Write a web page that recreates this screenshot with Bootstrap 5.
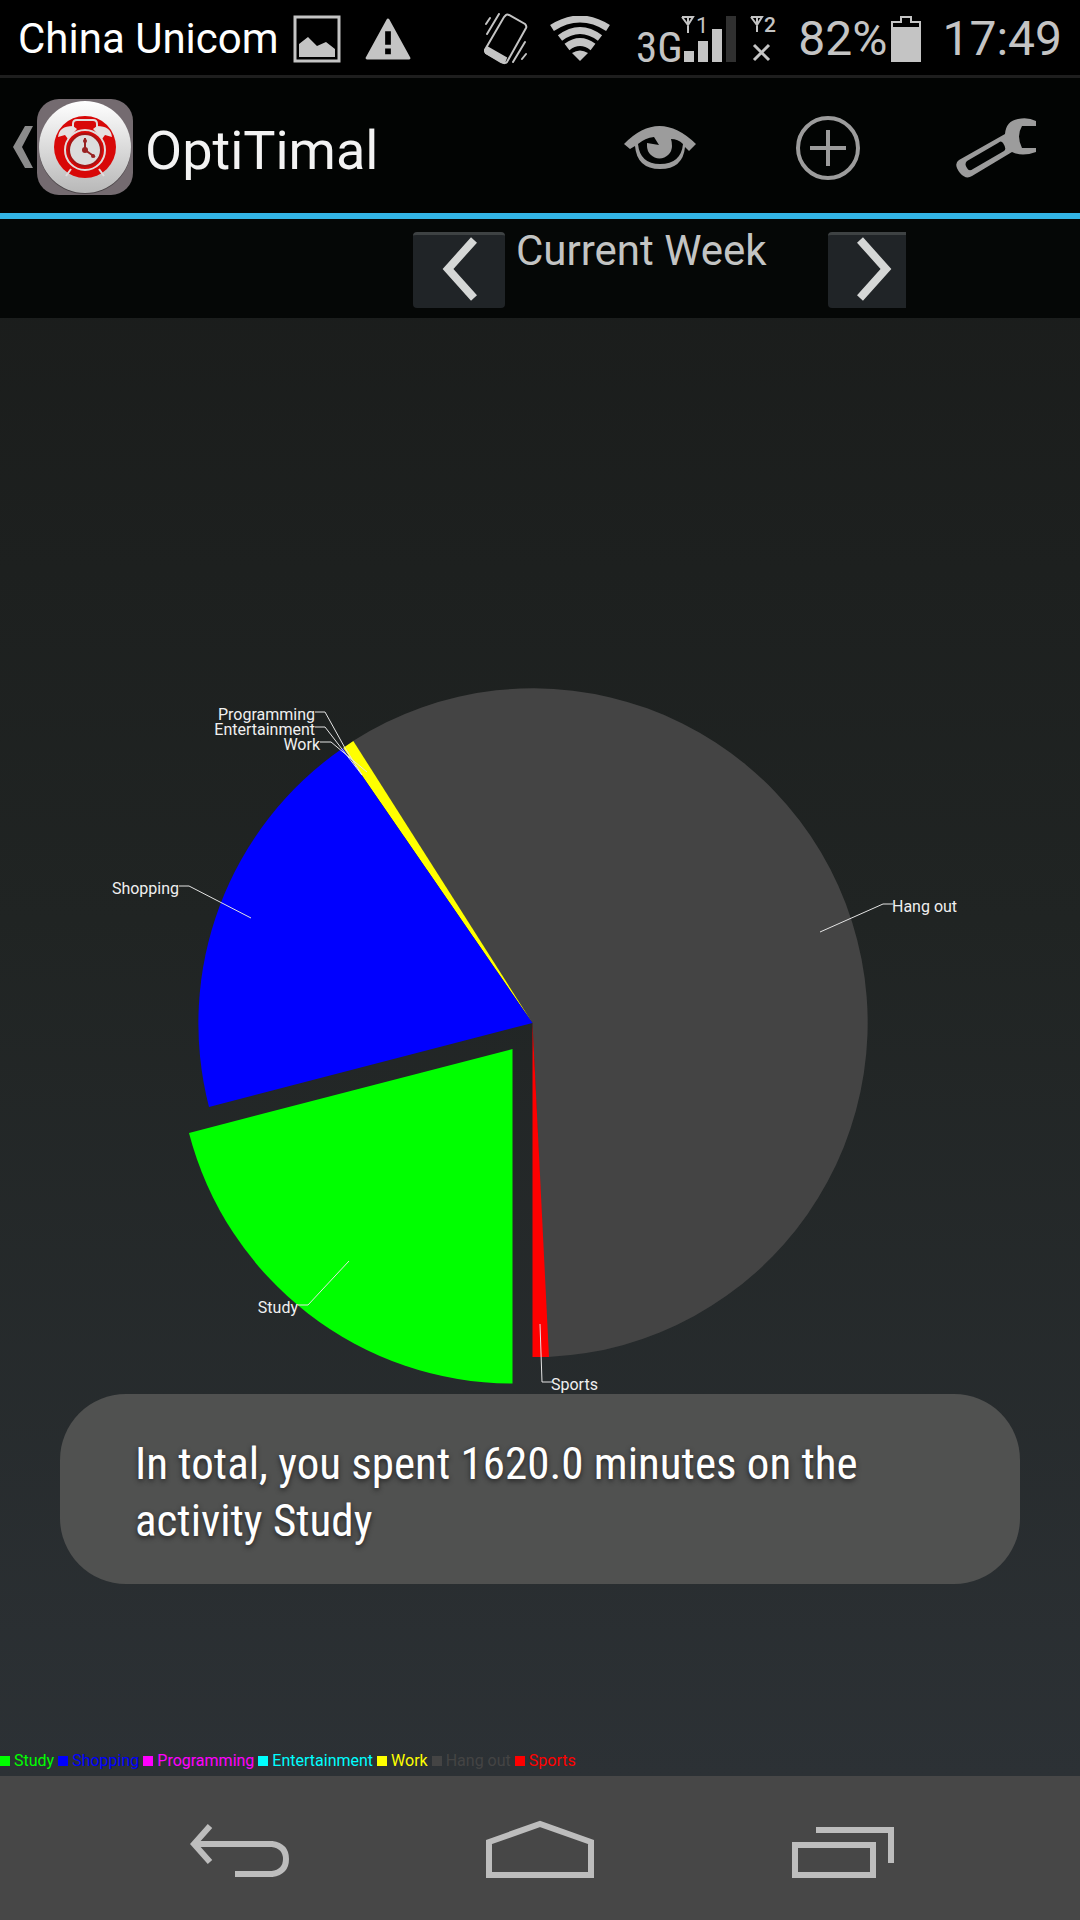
<!DOCTYPE html>
<html lang="en">
<head>
<meta charset="utf-8">
<meta name="viewport" content="width=device-width, initial-scale=1">
<title>OptiTimal</title>
<link href="https://cdn.jsdelivr.net/npm/bootstrap@5.3.0/dist/css/bootstrap.min.css" rel="stylesheet">
<style>
  body { font-family: Roboto, "Noto Sans", sans-serif; background: #000; color: #fff; }
  svg { display: block; flex: none; }
  .statusbar { height: 78px; border-bottom: 3px solid #1e1e1e; padding: 3px 18px 0; color: #c4c4c4; line-height: 56px; white-space: nowrap; }
  .carrier { font-size: 42px; color: #fff; padding-right: 14px; }
  .reading { font-size: 48px; }
  .battery { margin: 0 21px 0 4px; }
  .narrow { font-family: "Roboto Condensed", "Liberation Sans Narrow", Roboto, sans-serif; }
  .actionbar { height: 141px; border-bottom: 6px solid #33b5e5; background: #020403; }
  .brand { padding: 2px 0 0 13px; gap: 4px; color: #f3f3f3; }
  .brand h1 { font-size: 54px; font-weight: 400; line-height: 64px; padding: 8px 0 0 8px; }
  .plain { background: none; border: 0; padding: 0; }
  .action { width: 168px; height: 135px; }
  .weekbar { height: 99px; padding: 13px 0 0 413px; background: #050706; }
  .step { width: 92px; height: 76px; background: #202427; border: 0; border-top: 3px solid #3e4243; border-radius: 4px; padding: 0; }
  .step.clipped { width: 78px; border-radius: 4px 0 0 4px; }
  .week { width: 323px; padding-left: 11px; font-size: 42px; line-height: 38px; color: #c3c4c3; }
  .chart { background: linear-gradient(#1a1c1b, #202423 45%, #2c3135); }
  .chart text { font-size: 16px; fill: #f0f0f0; }
  .legend { height: 26px; gap: 4px; font-size: 16px; line-height: 22px; list-style: none; padding: 0; margin: 0; white-space: nowrap; }
  .legend li { display: flex; align-items: center; gap: 4px; }
  .legend li::before { content: ""; width: 10px; height: 10px; background: currentColor; }
  .study { color: #0f0; } .shopping { color: #00f; } .programming { color: #f0f; }
  .entertainment { color: #0ff; } .work { color: #ff0; } .hangout { color: #444; } .sports { color: #f00; }
  .notice { position: absolute; left: 60px; right: 60px; bottom: 192px; padding: 41px 72px 35px 75px; border-radius: 66px; background: #505150; font-size: 45px; line-height: 57px; text-shadow: 0 2px 5px #222; }
  .softkeys { height: 144px; background: #474747; padding-top: 2px; }
  .softkeys button { width: 300px; }
</style>
</head>
<body class="d-flex flex-column min-vh-100">
<header>
  <div class="statusbar d-flex align-items-center justify-content-between">
    <div class="d-flex align-items-center">
      <span class="carrier">China Unicom</span>
      <svg width="48" height="48" viewBox="0 0 48 48"><path d="M2 2H46V46H2Z" fill="none" stroke="#c4c4c4" stroke-width="3"/><path d="M6 42V29L15 22L24 31L33 27L42 34V42Z" fill="#c4c4c4"/></svg>
      <svg class="ms-4" width="46" height="42" viewBox="0 0 48 44"><path d="M24 2L46 42H2Z" fill="#c4c4c4" stroke="#c4c4c4" stroke-width="3" stroke-linejoin="round"/><path d="M21 14h6v14h-6zM21 32h6v6h-6z" fill="#000"/></svg>
    </div>
    <div class="d-flex align-items-center">
      <svg width="44" height="52" viewBox="0 0 44 52" fill="none" stroke="#c4c4c4" stroke-width="2" stroke-linecap="round"><path d="M22 2Q23 1 25 2L41 11Q43 13 42 15L23 49Q21 51 18 49L2 40Q0 38 2 35L20 4Z"/><path d="M3 34L22 45L20 50L17 49L2 40L1 37Z" fill="#c4c4c4"/><path d="M15 1L3 21M6 5L2 11M41 29L29 49M42 41L38 46"/></svg>
      <svg class="me-4" width="82" height="46" viewBox="-22 0 82 46" fill="none" stroke="#c4c4c4"><path d="M30 45L22 37Q30 32 38 37Z" fill="#c4c4c4" stroke="none"/><path d="M17 31Q30 21 43 31" stroke-width="8"/><path d="M10 22Q30 7 50 22" stroke-width="7"/><path d="M2 12Q30 -6 58 12" stroke-width="7"/></svg>
      <svg class="narrow" width="148" height="60" viewBox="-2 1 148 60" fill="#c4c4c4"><text x="0" y="54" font-size="43">3G</text><path d="M48 43h10v11H48zM62 33h10v21H62zM76 21h10v33H76z"/><path d="M90 8h10v46H90z" fill="#303030"/><path d="M46 9H57L52 17L46 9M52 9V25M115 9H126L121 17L115 9M121 9V24" fill="none" stroke="#c4c4c4" stroke-width="2"/><path d="M118 37L133 52M133 37L118 52" stroke="#c4c4c4" stroke-width="3"/><text x="60" y="25" font-family="Roboto" font-size="22">1</text><text x="128" y="24" font-family="Roboto" font-size="21" font-weight="500">2</text></svg>
      <span class="reading ps-3">82%</span>
      <svg class="battery" width="30" height="46" viewBox="0 0 30 46"><path d="M1 45V6H10V1H20V6H29V45Z" fill="none" stroke="#c4c4c4" stroke-width="2"/><path d="M1 11H29V45H1Z" fill="#c4c4c4"/></svg>
      <time class="reading">17:49</time>
    </div>
  </div>
  <nav class="actionbar d-flex align-items-center justify-content-between" aria-label="Main">
    <a class="brand d-flex align-items-center text-decoration-none" href="#">
      <svg width="20" height="42" viewBox="0 0 20 42"><path d="M12 0H20L9 21L20 42H12L0 21Z" fill="#8b8b8b"/></svg>
      <svg width="96" height="96" viewBox="0 0 96 96">
        <defs><linearGradient id="dial" x1="0" y1="0" x2="0" y2="1"><stop offset="0" stop-color="#fff"/><stop offset="1" stop-color="#b8b8b8"/></linearGradient></defs>
        <rect width="96" height="96" rx="22" fill="#746b70"/><circle cx="48" cy="49" r="46" fill="#4a4447"/><circle cx="48" cy="48" r="46" fill="url(#dial)"/>
        <circle cx="48" cy="48" r="31" fill="#d80808"/>
        <g fill="none" stroke="#e2dcdc" stroke-width="2"><path d="M36 30V25Q36 21 40 21H56Q60 21 60 25V30M34 70L29 77M62 70L67 77"/><circle cx="48" cy="51" r="20"/></g>
        <path d="M21 38Q22 27 36 27L40 30L31 40L28 36ZM75 38Q74 27 60 27L56 30L65 40L68 36Z" fill="#e6e0e0"/>
        <circle cx="48" cy="51" r="16" fill="#dcdcdc" stroke="#a51515" stroke-width="2"/><path d="M48 39V51L58 58" fill="none" stroke="#922" stroke-width="2"/><circle cx="48" cy="51" r="3" fill="#922"/><circle cx="48" cy="42" r="2" fill="#922"/><circle cx="56" cy="57" r="2" fill="#922"/>
      </svg>
      <h1 class="mb-0">OptiTimal</h1>
    </a>
    <div class="d-flex pt-1">
      <button class="plain action d-flex align-items-center justify-content-center" aria-label="View"><svg width="72" height="44" viewBox="0 0 72 44"><path d="M0 18Q35 -18 72 18L65 25L61 21Q59 43 36 43Q13 43 11 20L6 23ZM14 18Q16 38 36 38Q57 38 59 18Q54 13 47 13Q48 16 48 20A12 12 0 0 1 23 20V17L35 19L30 11Q21 12 14 18Z" fill="#9c9c9c" fill-rule="evenodd"/></svg></button>
      <button class="plain action d-flex align-items-center justify-content-center" aria-label="Add"><svg width="66" height="66" viewBox="0 0 66 66" fill="none" stroke="#9c9c9c" stroke-width="4"><circle cx="33" cy="33" r="30"/><path d="M33 15V51M15 33H51"/></svg></button>
      <button class="plain action d-flex align-items-center justify-content-center" aria-label="Settings"><svg width="80" height="60" viewBox="0 0 80 60"><path d="M80 3V8H66Q60 18 66 30H80V34Q66 39 56 34L16 58Q10 62 4 55Q-3 46 3 42L49 16Q50 3 62 1Q72 -1 80 3ZM47 25Q45 22 42 25L11 43Q8 46 11 50Q13 54 17 51L48 33Q51 31 47 25Z" fill="#9c9c9c" fill-rule="evenodd"/></svg></button>
    </div>
  </nav>
</header>
<main class="chart position-relative flex-grow-1 d-flex flex-column">
  <div class="weekbar d-flex align-items-start">
    <button class="step" aria-label="Previous week"><svg width="92" height="73" viewBox="0 0 92 73"><path d="M61 5L35 34L61 63" fill="none" stroke="#d5d7d6" stroke-width="8"/></svg></button>
    <span class="week">Current Week</span>
    <button class="step clipped" aria-label="Next week"><svg width="78" height="73" viewBox="0 0 78 73"><path d="M32 5L58 34L32 63" fill="none" stroke="#d5d7d6" stroke-width="8"/></svg></button>
  </div>
  <svg class="w-100" viewBox="0 318 1080 1432" role="img" aria-label="Time spent per activity">
    <path d="M532.5 1023L548 1357A334.5 334.5 0 1 0 353 741Z" fill="#444"/>
    <path d="M532.5 1023L353.3 741L343 748Z" fill="#ff0"/>
    <path d="M532.5 1023L343 748A334.5 334.5 0 0 0 209 1107Z" fill="#00f"/>
    <path d="M512.5 1049L189 1133A334.5 334.5 0 0 0 512.5 1383.5Z" fill="#0f0"/>
    <path d="M532.5 1023V1357H549Z" fill="#f00"/>
    <g fill="none" stroke="#e4e4e4"><path d="M315 712H325L345 748L362 775M315 727H325L362 775M320 742H331L367 772M179 886H189L251 918M820 932L883 904H893M298 1305H308L349 1261M540 1324L542 1382H552"/></g>
    <g text-anchor="end"><text x="315" y="720">Programming</text><text x="315" y="735">Entertainment</text><text x="320" y="750">Work</text><text x="179" y="894">Shopping</text><text x="298" y="1313">Study</text></g>
    <text x="892" y="912">Hang out</text><text x="551" y="1390">Sports</text>
  </svg>
  <ul class="legend d-flex align-items-start mt-auto">
    <li class="study">Study</li><li class="shopping">Shopping</li><li class="programming">Programming</li><li class="entertainment">Entertainment</li><li class="work">Work</li><li class="hangout">Hang out</li><li class="sports">Sports</li>
  </ul>
  <div class="notice narrow" role="status">In total, you spent 1620.0 minutes on the activity Study</div>
</main>
<footer class="softkeys d-flex justify-content-center">
  <button class="plain d-flex align-items-center justify-content-center" aria-label="Back"><svg width="100" height="58" viewBox="0 0 100 58" fill="none" stroke="#bdbdbd" stroke-width="6"><path d="M20 6L4 24L20 42M6 24H82Q96 26 96 39Q96 52 82 54H45"/></svg></button>
  <button class="plain d-flex align-items-center justify-content-center" aria-label="Home"><svg width="108" height="58" viewBox="0 0 108 58" fill="none" stroke="#bdbdbd" stroke-width="6"><path d="M3 55V22L54 4L105 22V55Z"/></svg></button>
  <button class="plain d-flex align-items-center justify-content-center" aria-label="Recent apps"><svg width="108" height="58" viewBox="-6 0 108 58" fill="none" stroke="#bdbdbd" stroke-width="6"><path d="M3 25H81V55H3ZM24 10H99V43"/></svg></button>
</footer>
<script src="https://cdn.jsdelivr.net/npm/bootstrap@5.3.0/dist/js/bootstrap.bundle.min.js"></script>
</body>
</html>
